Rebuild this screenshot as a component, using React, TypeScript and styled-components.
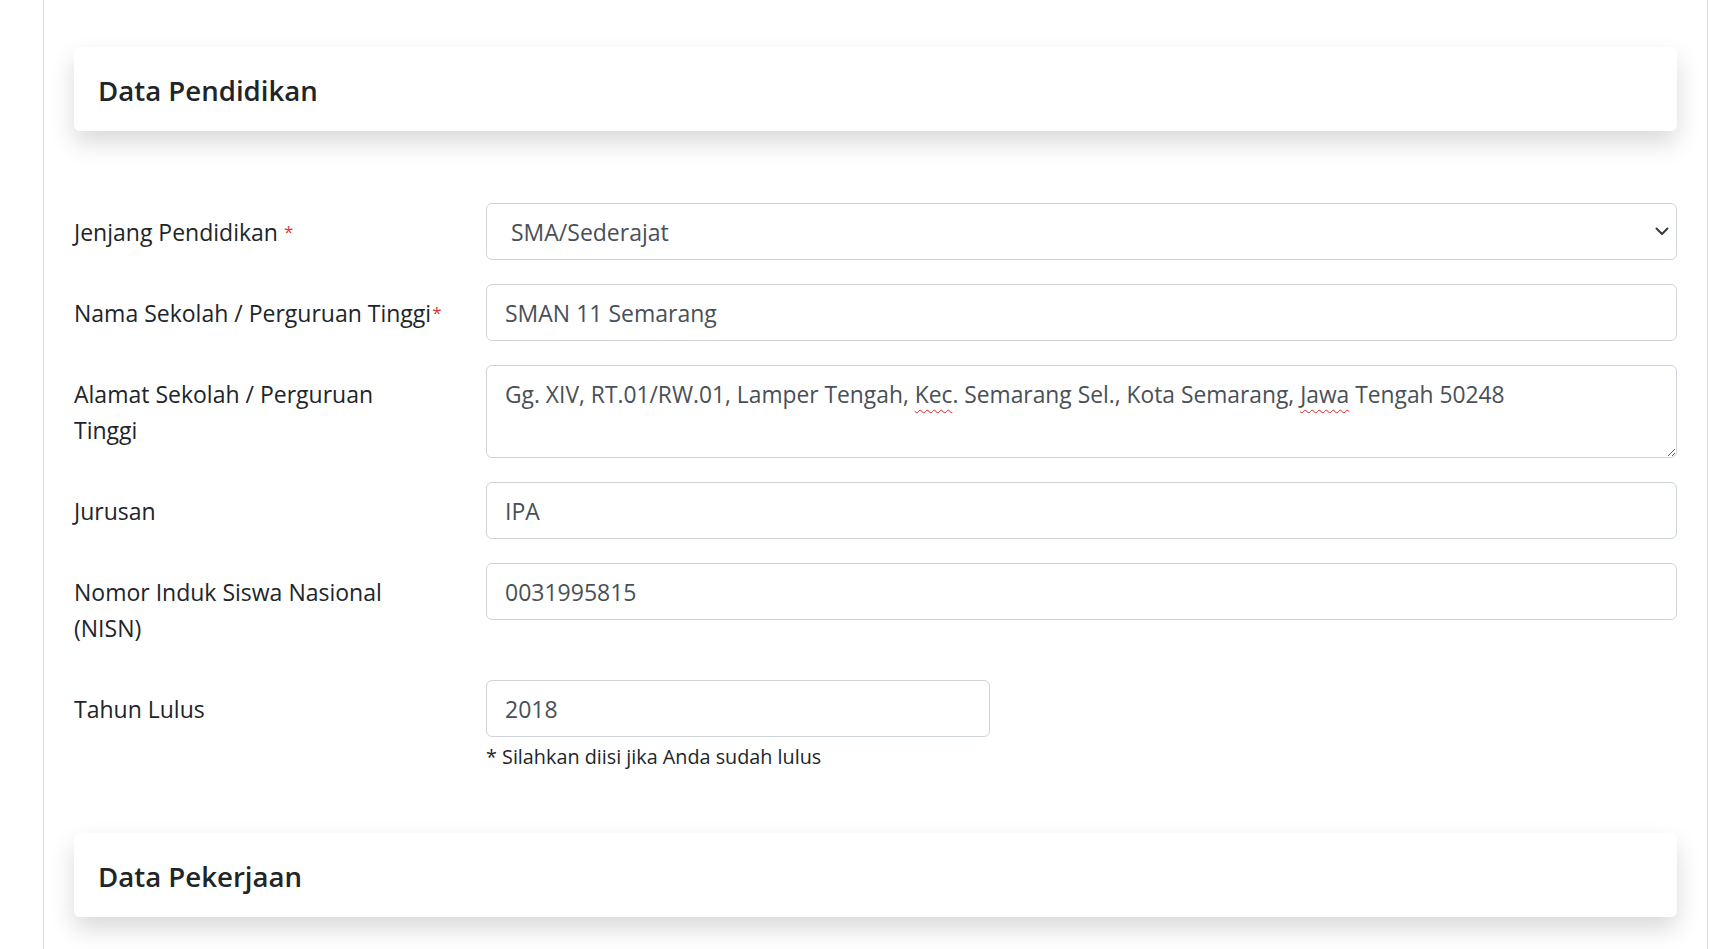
import React from "react";
import styled, { createGlobalStyle } from "styled-components";

const GlobalStyle = createGlobalStyle`
  html, body {
    margin: 0;
    padding: 0;
    background: #ffffff;
    overflow: hidden;
  }
  body {
    font-family: "Open Sans", "Noto Sans", sans-serif;
    color: #212529;
  }
  *, *::before, *::after { box-sizing: border-box; }
`;

const Page = styled.div`
  padding: 0 18px 0 43px;
`;

const Panel = styled.main`
  border-left: 1px solid #dee2e6;
  border-right: 1px solid #dee2e6;
  min-height: 949px;
  padding: 47px 30px 0 30px;
`;

const SectionCard = styled.div`
  background: #ffffff;
  border-radius: 6px;
  box-shadow: 0 12px 24px rgba(0, 0, 0, 0.15);
  padding: 25px 24px 23px;
`;

const SectionTitle = styled.h5`
  margin: 0;
  font-size: 27.6px;
  font-weight: 600;
  line-height: 36px;
  color: #212529;
`;

const Form = styled.form`
  display: flex;
  flex-direction: column;
  gap: 24px;
  margin: 72px 0 61px;
`;

const Row = styled.div`
  display: grid;
  grid-template-columns: 367px 1fr;
  column-gap: 45px;
  align-items: start;
`;

const Label = styled.label<{ $nowrap?: boolean }>`
  padding: 10.5px 0;
  font-size: 23px;
  line-height: 36px;
  color: #212529;
  white-space: ${(p) => (p.$nowrap ? "nowrap" : "normal")};
`;

const Required = styled.span<{ $gap?: boolean }>`
  color: #e3342f;
  font-size: 17px;
  vertical-align: 3px;
  margin-left: ${(p) => (p.$gap ? "6px" : "1px")};
`;

const Field = styled.div`
  display: flex;
  flex-direction: column;
  align-items: flex-start;
`;

const fieldBase = `
  font-family: "Open Sans", "Noto Sans", sans-serif;
  font-size: 23px;
  color: #495057;
  background: #ffffff;
  border: 1px solid #ced4da;
  border-radius: 6px;
  outline: none;
`;

const Input = styled.input<{ $short?: boolean }>`
  ${fieldBase}
  height: 57px;
  padding: 0 18px;
  width: ${(p) => (p.$short ? "504px" : "100%")};
`;

const SelectWrap = styled.div`
  position: relative;
  width: 100%;
`;

const Select = styled.select`
  ${fieldBase}
  appearance: none;
  -webkit-appearance: none;
  width: 100%;
  height: 57px;
  padding: 0 48px 0 24px;
`;

const Chevron = styled.svg`
  position: absolute;
  right: 8px;
  top: 50%;
  width: 14px;
  height: 10px;
  margin-top: -6px;
  pointer-events: none;
`;

const TextArea = styled.div`
  ${fieldBase}
  font-size: 22.8px;
  width: 100%;
  height: 93px;
  padding: 10.5px 18px;
  line-height: 36px;
  resize: vertical;
  overflow: auto;
  white-space: nowrap;
`;

const Misspelled = styled.span`
  text-decoration-line: underline;
  text-decoration-style: wavy;
  text-decoration-color: #e02020;
  text-decoration-thickness: 1.4px;
  text-underline-offset: 6px;
`;

const HelpText = styled.small`
  margin-top: 6px;
  font-size: 19.8px;
  line-height: 28.8px;
  color: #212529;
`;

export default function App() {
  return (
    <>
      <GlobalStyle />
      <Page>
        <Panel>
          <SectionCard>
            <SectionTitle>Data Pendidikan</SectionTitle>
          </SectionCard>

          <Form onSubmit={(e) => e.preventDefault()}>
            <Row>
              <Label htmlFor="jenjang">
                Jenjang Pendidikan<Required $gap>*</Required>
              </Label>
              <SelectWrap>
                <Select id="jenjang" defaultValue="sma">
                  <option value="sma">SMA/Sederajat</option>
                  <option value="d3">Diploma</option>
                  <option value="s1">Sarjana</option>
                </Select>
                <Chevron viewBox="0 0 14 10" aria-hidden="true">
                  <path
                    d="M1.5 2.5 L7 8 L12.5 2.5"
                    fill="none"
                    stroke="#343a40"
                    strokeWidth="2"
                    strokeLinecap="round"
                    strokeLinejoin="round"
                  />
                </Chevron>
              </SelectWrap>
            </Row>

            <Row>
              <Label htmlFor="sekolah" $nowrap>
                Nama Sekolah / Perguruan Tinggi<Required>*</Required>
              </Label>
              <Input id="sekolah" defaultValue="SMAN 11 Semarang" />
            </Row>

            <Row>
              <Label>Alamat Sekolah / Perguruan Tinggi</Label>
              <TextArea role="textbox" aria-multiline="true">
                Gg. XIV, RT.01/RW.01, Lamper Tengah, <Misspelled>Kec</Misspelled>. Semarang Sel., Kota
                Semarang, <Misspelled>Jawa</Misspelled> Tengah 50248
              </TextArea>
            </Row>

            <Row>
              <Label htmlFor="jurusan">Jurusan</Label>
              <Input id="jurusan" defaultValue="IPA" />
            </Row>

            <Row>
              <Label htmlFor="nisn">Nomor Induk Siswa Nasional (NISN)</Label>
              <Input id="nisn" defaultValue="0031995815" />
            </Row>

            <Row>
              <Label htmlFor="lulus">Tahun Lulus</Label>
              <Field>
                <Input id="lulus" $short defaultValue="2018" />
                <HelpText>* Silahkan diisi jika Anda sudah lulus</HelpText>
              </Field>
            </Row>
          </Form>

          <SectionCard>
            <SectionTitle>Data Pekerjaan</SectionTitle>
          </SectionCard>
        </Panel>
      </Page>
    </>
  );
}
